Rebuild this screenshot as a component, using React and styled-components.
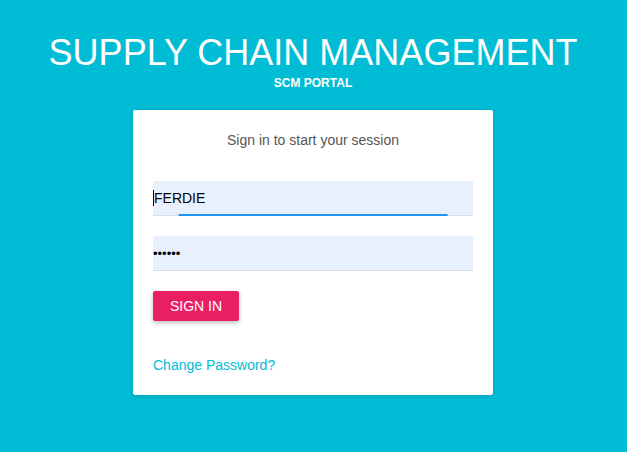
import React from 'react';
import styled, { createGlobalStyle } from 'styled-components';

const GlobalStyle = createGlobalStyle`
  html, body {
    margin: 0;
    padding: 0;
    background: #00bcd4;
    font-family: "Liberation Sans", Arial, sans-serif;
  }
`;

const Page = styled.div`
  height: 452px;
  display: flex;
  flex-direction: column;
  align-items: center;
  padding: 31px 1px 0 0;
  box-sizing: border-box;
  color: #fff;
`;

const Title = styled.h1`
  margin: 0;
  font-size: 36px;
  font-weight: normal;
  line-height: 44px;
`;

const Subtitle = styled.div`
  font-size: 12px;
  font-weight: bold;
  line-height: 14px;
  margin-top: 1px;
`;

const Card = styled.div`
  margin-top: 20px;
  width: 360px;
  box-sizing: border-box;
  background: #fff;
  border-radius: 2px;
  box-shadow: 0 1px 4px rgba(0, 0, 0, 0.15);
  padding: 22px 20px 22px;
`;

const Lead = styled.p`
  margin: 0 0 33px;
  text-align: center;
  font-size: 14px;
  line-height: 16px;
  color: #555;
`;

const Field = styled.div`
  position: relative;
  height: 34px;
  background: #e8f0fe;
  border-bottom: 1px solid #dadce0;
  margin-bottom: ${p => p.$gap || 0}px;
  display: flex;
  align-items: center;
  font-size: 14px;
  color: #000;
`;

const Caret = styled.span`
  width: 1px;
  height: 16px;
  background: #000;
`;

const Dots = styled.span`
  font-size: 13px;
  line-height: 1;
`;

const FocusLine = styled.span`
  position: absolute;
  left: 50%;
  bottom: -1px;
  height: 2px;
  transform: translateX(-50%);
  background: #2196f3;
`;

const Button = styled.button`
  display: block;
  margin-top: 20px;
  height: 30px;
  padding: 0 17px;
  border: none;
  border-radius: 2px;
  background: #e91e63;
  color: #fff;
  font-family: inherit;
  font-size: 14px;
  text-transform: uppercase;
  box-shadow: 0 2px 5px rgba(0, 0, 0, 0.26);
  cursor: pointer;
`;

const Link = styled.a`
  display: block;
  margin-top: 36px;
  font-size: 14px;
  line-height: 16px;
  color: #00bcd4;
  text-decoration: none;
`;

export default function App() {
  return (
    <>
      <GlobalStyle />
      <Page>
        <Title>SUPPLY CHAIN MANAGEMENT</Title>
        <Subtitle>SCM PORTAL</Subtitle>
        <Card>
          <Lead>Sign in to start your session</Lead>
          <Field $gap={20}>
            <Caret />
            FERDIE
            <FocusLine style={{ width: '84%' }} />
          </Field>
          <Field>
            <Dots>••••••</Dots>
          </Field>
          <Button>Sign in</Button>
          <Link href="#">Change Password?</Link>
        </Card>
      </Page>
    </>
  );
}
